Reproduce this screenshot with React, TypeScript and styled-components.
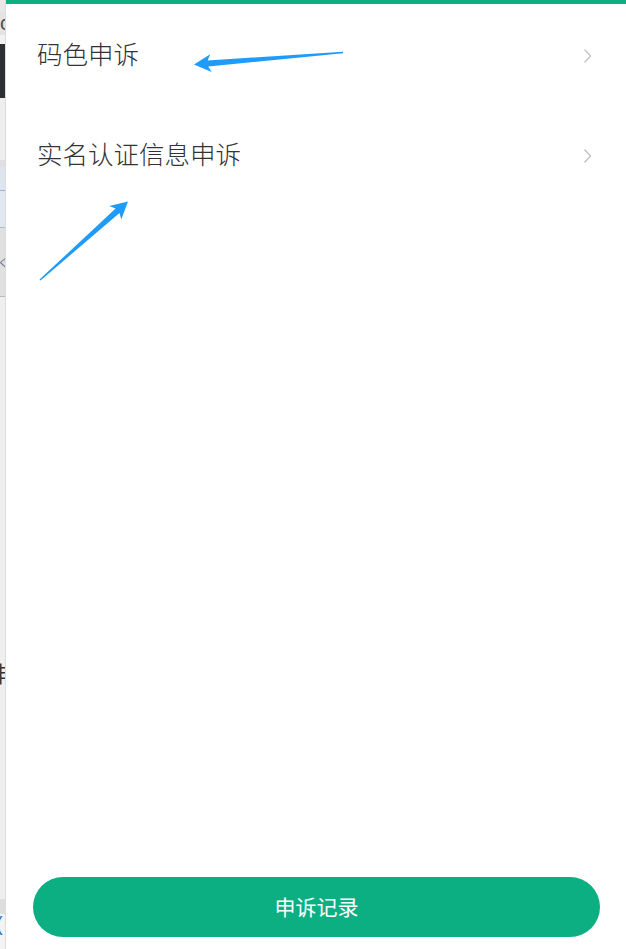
import React from "react";
import styled, { createGlobalStyle } from "styled-components";

const Global = createGlobalStyle`
  html, body { margin: 0; padding: 0; background: #ffffff; }
  body { font-family: "Noto Sans CJK SC", "Noto Sans", sans-serif; overflow: hidden; }
`;

const Page = styled.div`
  display: flex;
  width: 626px;
  height: 949px;
  position: relative;
  overflow: hidden;
`;

const Strip = styled.div`
  width: 6px;
  flex: none;
  display: flex;
  flex-direction: column;
  overflow: hidden;
  border-right: 1px solid #dcdcdc;
  box-sizing: border-box;
`;

const Band = styled.div<{ $h: number; $bg: string; $line?: string }>`
  height: ${(p) => p.$h}px;
  flex: none;
  background: ${(p) => p.$bg};
  border-bottom: ${(p) => (p.$line ? `1px solid ${p.$line}` : "none")};
  box-sizing: border-box;
  position: relative;
  overflow: hidden;
`;

const Fill = styled.div<{ $bg: string }>`
  flex: 1;
  background: ${(p) => p.$bg};
  display: flex;
  flex-direction: column;
`;

const PeekGlyph = styled.span<{ $color: string; $size: number; $left: number; $top: number }>`
  position: absolute;
  left: ${(p) => p.$left}px;
  top: ${(p) => p.$top}px;
  font-family: "Liberation Sans", "Noto Sans CJK SC", sans-serif;
  font-size: ${(p) => p.$size}px;
  line-height: 1;
  color: ${(p) => p.$color};
  white-space: nowrap;
`;

const Panel = styled.div`
  flex: 1;
  display: flex;
  flex-direction: column;
  background: #ffffff;
  border-top: 4px solid #0fae80;
`;

const Row = styled.div`
  height: 100px;
  display: flex;
  align-items: center;
  justify-content: space-between;
  padding: 0 34px 0 31px;
  box-sizing: border-box;
  flex: none;
`;

const Label = styled.span`
  font-family: "Noto Sans CJK SC", sans-serif;
  font-size: 25.5px;
  font-weight: 300;
  color: #333333;
  letter-spacing: 0;
  margin-top: -4px;
`;

const Chevron = styled.svg`
  width: 9px;
  height: 16px;
  flex: none;
  margin-top: 4px;
`;

const Spacer = styled.div`
  flex: 1;
`;

const Footer = styled.div`
  padding: 0 26px 12px 27px;
  flex: none;
`;

const RecordButton = styled.button`
  width: 100%;
  height: 60px;
  border: none;
  border-radius: 30px;
  background: #0caf82;
  color: #ffffff;
  font-family: "Noto Sans CJK SC", sans-serif;
  font-size: 21px;
  display: flex;
  align-items: center;
  justify-content: center;
  padding: 0 0 3px 0;
  cursor: pointer;
`;

const Annot = styled.svg`
  position: absolute;
  left: 0;
  top: 0;
  width: 626px;
  height: 949px;
  pointer-events: none;
`;

type P = [number, number];

function arrowPoints(tail: P, tip: P, L = 16, W = 9, near = 3.2, far = 0.6): string {
  const dx = tail[0] - tip[0];
  const dy = tail[1] - tip[1];
  const len = Math.hypot(dx, dy);
  const u: P = [dx / len, dy / len];
  const n: P = [-u[1], u[0]];
  const at = (d: number, s: number): P => [tip[0] + u[0] * d + n[0] * s, tip[1] + u[1] * d + n[1] * s];
  const pts: P[] = [
    tip,
    at(L, W),
    at(L - 3, near),
    [tail[0] + n[0] * far, tail[1] + n[1] * far],
    [tail[0] - n[0] * far, tail[1] - n[1] * far],
    at(L - 3, -near),
    at(L, -W),
  ];
  return pts.map((p) => `${p[0].toFixed(1)},${p[1].toFixed(1)}`).join(" ");
}

const items = ["码色申诉", "实名认证信息申诉"];

export default function App() {
  return (
    <>
      <Global />
      <Page>
        <Strip>
          <Band $h={12} $bg="#e8e8e8" />
          <Band $h={23} $bg="#e4e4e4">
            <PeekGlyph $color="#4a4f55" $size={20} $left={0} $top={1}>c</PeekGlyph>
          </Band>
          <Band $h={9} $bg="#f2f2f2" />
          <Band $h={54} $bg="#2c3034" />
          <Band $h={62} $bg="#eeeeee" />
          <Band $h={7} $bg="#e0e0e0" />
          <Band $h={24} $bg="#dfe5ee" $line="#93b4d8" />
          <Band $h={37} $bg="#e1e7ef" $line="#a9bfd8" />
          <Band $h={30} $bg="#e0e0e0" />
          <Band $h={12} $bg="#e0e0e0">
            <PeekGlyph $color="#56709a" $size={11} $left={-2} $top={0}>ぐ</PeekGlyph>
          </Band>
          <Band $h={27} $bg="#e0e0e0" $line="#bcbcbc" />
          <Band $h={366} $bg="#efefef" />
          <Band $h={26} $bg="#efefef">
            <PeekGlyph $color="#333333" $size={22} $left={-13} $top={1}>非</PeekGlyph>
          </Band>
          <Band $h={210} $bg="#efefef" />
          <Band $h={15} $bg="#dedede" />
          <Fill $bg="#f3f3f3">
            <Band $h={24} $bg="#f3f3f3">
              <PeekGlyph $color="#2f6fc0" $size={20} $left={-4} $top={0}>(</PeekGlyph>
            </Band>
          </Fill>
        </Strip>
        <Panel>
          {items.map((t) => (
            <Row key={t}>
              <Label>{t}</Label>
              <Chevron viewBox="0 0 9 16">
                <polyline points="1.5,1.5 7.5,8 1.5,14.5" fill="none" stroke="#c4c4c4" strokeWidth="1.4" />
              </Chevron>
            </Row>
          ))}
          <Spacer />
          <Footer>
            <RecordButton>申诉记录</RecordButton>
          </Footer>
        </Panel>
        <Annot viewBox="0 0 626 949">
          <polygon points={arrowPoints([343, 52.5], [194, 64.5], 17, 9, 3, 0.7)} fill="#1f9bfa" />
          <polygon points={arrowPoints([40, 280], [128, 201.5], 17, 9, 3, 0.7)} fill="#1f9bfa" />
        </Annot>
      </Page>
    </>
  );
}
